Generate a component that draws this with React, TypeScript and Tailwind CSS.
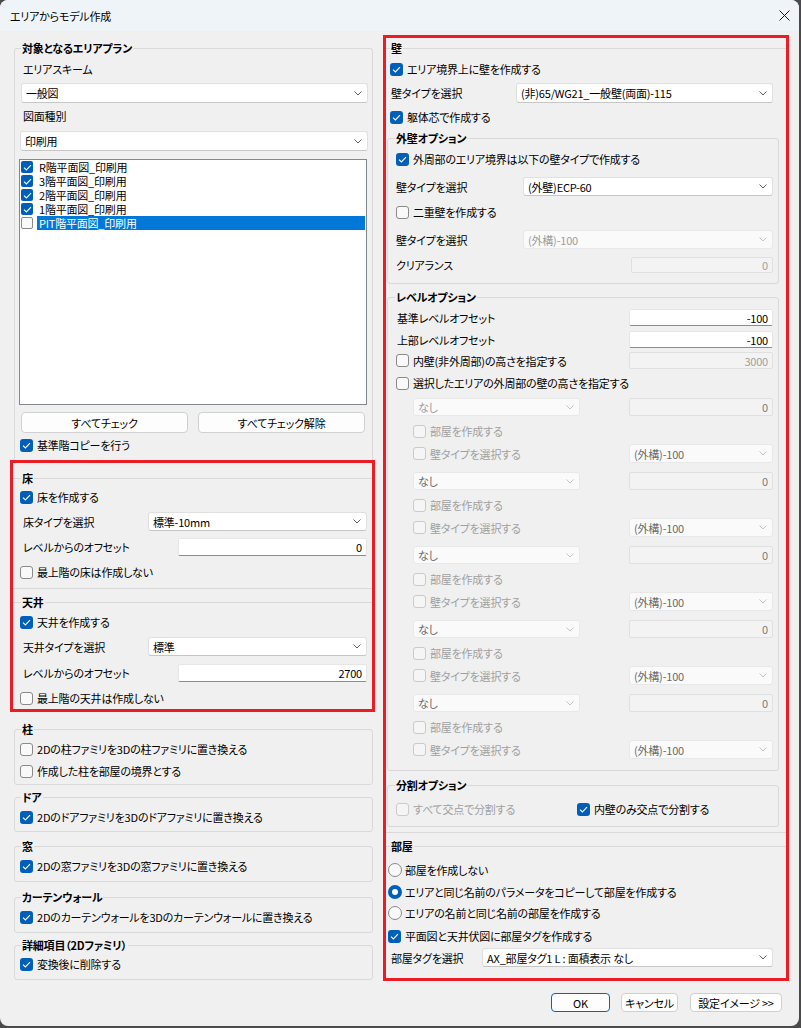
import React from "react";

type CBProps = { label: string; checked?: boolean; disabled?: boolean; className?: string };

function Tick() {
  return (
    <svg width="9" height="7" viewBox="0 0 9 7" fill="none">
      <path d="M1 3.6L3.4 5.9L8 1.2" stroke="#fff" strokeWidth="1.1" />
    </svg>
  );
}

function CheckBox({ label, checked, disabled, className = "" }: CBProps) {
  const box = checked
    ? "bg-[#005fb8]"
    : disabled
      ? "border border-[#cacaca] bg-[#f5f5f5]"
      : "border border-[#8a8a8a] bg-[#f9f9f9]";
  return (
    <div className={`flex h-[14px] items-center gap-[4px] ${className}`}>
      <span className={`flex h-[13px] w-[13px] shrink-0 items-center justify-center rounded-[3px] ${box}`}>
        {checked && <Tick />}
      </span>
      <span className={`whitespace-nowrap ${disabled ? "text-[#a0a0a0]" : ""}`}>{label}</span>
    </div>
  );
}

function Radio({ label, checked, className = "" }: CBProps) {
  return (
    <div className={`flex h-[14px] items-center gap-[3px] ${className}`}>
      {checked ? (
        <span className="flex h-[14px] w-[14px] shrink-0 items-center justify-center rounded-full bg-[#005fb8]">
          <span className="h-[6px] w-[6px] rounded-full bg-white" />
        </span>
      ) : (
        <span className="h-[14px] w-[14px] shrink-0 rounded-full border border-[#8a8a8a] bg-[#f9f9f9]" />
      )}
      <span className="whitespace-nowrap">{label}</span>
    </div>
  );
}

function Chevron({ disabled }: { disabled?: boolean }) {
  return (
    <svg width="8" height="5" viewBox="0 0 8 5" fill="none">
      <path d="M0.5 0.5L4 4L7.5 0.5" stroke={disabled ? "#c4c4c4" : "#606060"} />
    </svg>
  );
}

function Select({ value, disabled, tone = "", className = "" }: { value: string; disabled?: boolean; tone?: string; className?: string }) {
  return (
    <div
      className={`flex h-full items-center justify-between rounded-[3px] border pl-[4px] pr-[5px] ${
        disabled ? "border-[#e8e8e8] bg-[#fafafa] text-[#9d9d9d]" : "border-[#e0e0e0] border-b-[#c6c6c6] bg-white"
      } ${className}`}
    >
      <span className={`whitespace-nowrap ${tone}`}>{value}</span>
      <Chevron disabled={disabled} />
    </div>
  );
}

function Field({ value, disabled, tone = "", className = "" }: { value: string; disabled?: boolean; tone?: string; className?: string }) {
  return (
    <div
      className={`flex h-full items-center justify-end rounded-[2px] border pr-[4px] ${
        disabled ? "border-[#e0e0e0] bg-[#f3f3f3] text-[#a0a0a0]" : "border-[#e6e6e6] border-b-[#8c8c8c] bg-white"
      } ${className}`}
    >
      <span className={tone}>{value}</span>
    </div>
  );
}

function Group({
  title,
  legendClass = "",
  className = "",
  children,
}: {
  title: string;
  legendClass?: string;
  className?: string;
  children: React.ReactNode;
}) {
  return (
    <fieldset className={`min-w-0 rounded-[3px] border border-[#d9d9d9] ${className}`}>
      <legend className={`px-[1px] font-bold leading-[14px] ${legendClass}`}>{title}</legend>
      {children}
    </fieldset>
  );
}

const plans = [
  { name: "R階平面図_印刷用", checked: true },
  { name: "3階平面図_印刷用", checked: true },
  { name: "2階平面図_印刷用", checked: true },
  { name: "1階平面図_印刷用", checked: true },
  { name: "PIT階平面図_印刷用", checked: false, selected: true },
];

function LevelBlock({ first }: { first: boolean }) {
  return (
    <div className={`${first ? "mt-[8px]" : "mt-[9px]"} pl-[17px]`}>
      <div className="flex h-[18px] items-center">
        <Select value="なし" disabled tone={first ? "" : "text-[#6a6a6a]"} className="w-[167px]" />
        <Field value="0" disabled tone="text-[#7a7a7a]" className="ml-auto w-[144px]" />
      </div>
      <CheckBox label="部屋を作成する" disabled className="mt-[8px]" />
      <div className="mt-[6px] flex h-[19px] items-center">
        <CheckBox label="壁タイプを選択する" disabled />
        <Select value="(外構)-100" disabled tone="text-[#6a6a6a]" className="ml-auto w-[144px]" />
      </div>
    </div>
  );
}

export default function App() {
  return (
    <div className="h-[1028px] w-[801px] bg-[#4a4a4a] font-['Noto_Sans_CJK_JP','Noto_Sans',sans-serif] text-[11px] leading-[14px] tracking-[-0.2px] text-black [font-feature-settings:'palt']">
      <div className="flex h-[1026px] w-[799px] flex-col overflow-hidden rounded-[8px] bg-[#f0f0f0]">
        {/* Title bar */}
        <div className="flex h-[31px] shrink-0 items-center justify-between bg-[#eff4f9] pl-[10px] pr-[9px]">
          <span>エリアからモデル作成</span>
          <svg width="11" height="11" viewBox="0 0 11 11" fill="none">
            <path d="M0.5 0.5L10.5 10.5M10.5 0.5L0.5 10.5" stroke="#1a1a1a" strokeWidth="1" />
          </svg>
        </div>

        <div className="flex items-start gap-[8px] px-[10px] pt-[4px]">
          {/* Left column */}
          <div className="w-[365px] shrink-0 pt-[6px]">
            <Group title="対象となるエリアプラン" legendClass="ml-[6px]" className="ml-[4px] mr-[2px] rounded-b-none border-b-0">
              <div className="pb-[8px] pl-[6px] pr-[4px]">
                <div className="mt-[7px] pl-[2px]">エリアスキーム</div>
                <div className="mt-[7px] h-[20px]">
                  <Select value="一般図" />
                </div>
                <div className="mt-[6px] pl-[2px]">図面種別</div>
                <div className="mt-[8px] h-[20px]">
                  <Select value="印刷用" className="-ml-[1px]" />
                </div>
                <div className="-ml-[2px] mr-[1px] mt-[8px] h-[246px] border border-[#828790] bg-white">
                  {plans.map((p) => (
                    <div key={p.name} className="flex h-[14px] items-center">
                      <span
                        className={`ml-[1px] flex h-[12px] w-[12px] shrink-0 items-center justify-center rounded-[2px] ${
                          p.checked ? "bg-[#005fb8]" : "border border-[#8a8a8a] bg-[#f9f9f9]"
                        }`}
                      >
                        {p.checked && <Tick />}
                      </span>
                      <span
                        className={`ml-[4px] mr-[1px] flex h-[14px] flex-1 items-center px-[2px] ${
                          p.selected ? "bg-[#0078d7] text-white" : ""
                        }`}
                      >
                        {p.name}
                      </span>
                    </div>
                  ))}
                </div>
                <div className="mt-[7px] flex gap-[10px]">
                  <button className="h-[21px] w-[167px] rounded-[4px] border border-[#d0d0d0] bg-[#fdfdfd]">すべてチェック</button>
                  <button className="h-[21px] w-[167px] rounded-[4px] border border-[#d0d0d0] bg-[#fdfdfd]">すべてチェック解除</button>
                </div>
                <CheckBox label="基準階コピーを行う" checked className="-ml-[1px] mt-[5px]" />
              </div>
            </Group>

            {/* Floor / ceiling */}
            <div className="border-[3px] border-[#ec1c24]">
              <Group title="床" legendClass="ml-[8px]" className="mt-[8px] rounded-none border-x-0">
                <div className="pb-[9px] pl-[7px] pr-[5px]">
                  <CheckBox label="床を作成する" checked className="mt-[5px]" />
                  <div className="mt-[8px] flex h-[19px] items-center">
                    <span className="ml-[3px]">床タイプを選択</span>
                    <Select value="標準-10mm" className="ml-auto w-[219px]" />
                  </div>
                  <div className="mt-[7px] flex h-[18px] items-center">
                    <span className="ml-[3px]">レベルからのオフセット</span>
                    <Field value="0" className="ml-auto w-[189px]" />
                  </div>
                  <CheckBox label="最上階の床は作成しない" className="mt-[9px]" />
                </div>
              </Group>
              <Group title="天井" legendClass="ml-[8px]" className="mt-[6px] rounded-none border-x-0 border-b-0">
                <div className="pb-[4px] pl-[7px] pr-[5px]">
                  <CheckBox label="天井を作成する" checked className="mt-[6px]" />
                  <div className="mt-[8px] flex h-[19px] items-center">
                    <span className="ml-[3px]">天井タイプを選択</span>
                    <Select value="標準" className="ml-auto w-[219px]" />
                  </div>
                  <div className="mt-[8px] flex h-[18px] items-center">
                    <span className="ml-[3px]">レベルからのオフセット</span>
                    <Field value="2700" className="ml-auto w-[189px]" />
                  </div>
                  <CheckBox label="最上階の天井は作成しない" className="mt-[9px]" />
                </div>
              </Group>
            </div>

            <Group title="柱" legendClass="ml-[6px]" className="ml-[4px] mr-[2px] mt-[10px]">
              <div className="pb-[6px] pl-[5px]">
                <CheckBox label="2Dの柱ファミリを3Dの柱ファミリに置き換える" className="mt-[6px]" />
                <CheckBox label="作成した柱を部屋の境界とする" className="mt-[8px]" />
              </div>
            </Group>
            <Group title="ドア" legendClass="ml-[6px]" className="ml-[4px] mr-[2px] mt-[5px]">
              <div className="pb-[7px] pl-[5px]">
                <CheckBox label="2Dのドアファミリを3Dのドアファミリに置き換える" checked className="mt-[6px]" />
              </div>
            </Group>
            <Group title="窓" legendClass="ml-[6px]" className="ml-[4px] mr-[2px] mt-[7px]">
              <div className="pb-[8px] pl-[5px]">
                <CheckBox label="2Dの窓ファミリを3Dの窓ファミリに置き換える" checked className="mt-[6px]" />
              </div>
            </Group>
            <Group title="カーテンウォール" legendClass="ml-[6px]" className="ml-[4px] mr-[2px] mt-[8px]">
              <div className="pb-[8px] pl-[5px]">
                <CheckBox label="2Dのカーテンウォールを3Dのカーテンウォールに置き換える" checked className="mt-[6px]" />
              </div>
            </Group>
            <Group title="詳細項目（2Dファミリ）" legendClass="ml-[6px]" className="ml-[4px] mr-[2px] mt-[5px]">
              <div className="pb-[8px] pl-[5px]">
                <CheckBox label="変換後に削除する" checked className="mt-[5px]" />
              </div>
            </Group>
          </div>

          {/* Right column */}
          <div className="w-[406px] shrink-0 border-[3px] border-[#ec1c24]">
            <Group title="壁" legendClass="ml-[4px]" className="mt-[3px] rounded-none border-x-0">
              <div className="pl-[4px] pr-[13px]">
                <CheckBox label="エリア境界上に壁を作成する" checked className="mt-[7px]" />
                <div className="mt-[7px] flex h-[20px] items-center">
                  <span className="ml-[1px]">壁タイプを選択</span>
                  <Select value="(非)65/WG21_一般壁(両面)-115" className="ml-auto w-[257px]" />
                </div>
                <CheckBox label="躯体芯で作成する" checked className="mt-[7px]" />
              </div>

              <Group title="外壁オプション" legendClass="ml-[7px]" className="ml-[1px] mr-[7px] mt-[7px]">
                <div className="pb-[10px] pl-[8px] pr-[5px]">
                  <CheckBox label="外周部のエリア境界は以下の壁タイプで作成する" checked className="mt-[7px]" />
                  <div className="mt-[11px] flex h-[19px] items-center">
                    <span>壁タイプを選択</span>
                    <Select value="(外壁)ECP-60" className="ml-auto w-[250px]" />
                  </div>
                  <CheckBox label="二重壁を作成する" className="mt-[9px]" />
                  <div className="mt-[11px] flex h-[19px] items-center">
                    <span>壁タイプを選択</span>
                    <Select value="(外構)-100" disabled className="ml-auto w-[250px]" />
                  </div>
                  <div className="mt-[8px] flex h-[16px] items-center">
                    <span>クリアランス</span>
                    <Field value="0" disabled className="ml-auto w-[142px]" />
                  </div>
                </div>
              </Group>

              <Group title="レベルオプション" legendClass="ml-[7px]" className="ml-[1px] mr-[7px] mt-[6px]">
                <div className="pb-[11px] pl-[8px] pr-[5px]">
                  <div className="mt-[5px] flex h-[17px] items-center">
                    <span className="ml-[1px]">基準レベルオフセット</span>
                    <Field value="-100" className="ml-auto w-[144px]" />
                  </div>
                  <div className="mt-[5px] flex h-[17px] items-center">
                    <span className="ml-[1px]">上部レベルオフセット</span>
                    <Field value="-100" className="ml-auto w-[144px]" />
                  </div>
                  <div className="mt-[4px] flex h-[17px] items-center">
                    <CheckBox label="内壁(非外周部)の高さを指定する" />
                    <Field value="3000" disabled className="ml-auto w-[144px]" />
                  </div>
                  <CheckBox label="選択したエリアの外周部の壁の高さを指定する" className="mt-[7px]" />
                  {[0, 1, 2, 3, 4].map((i) => (
                    <LevelBlock key={i} first={i === 0} />
                  ))}
                </div>
              </Group>

              <Group title="分割オプション" legendClass="ml-[7px]" className="ml-[1px] mr-[7px] mt-[7px]">
                <div className="flex pb-[10px] pl-[8px] pt-[10px]">
                  <CheckBox label="すべて交点で分割する" disabled className="w-[181px]" />
                  <CheckBox label="内壁のみ交点で分割する" checked />
                </div>
              </Group>
              <div className="h-[5px]" />
            </Group>

            <Group title="部屋" legendClass="ml-[4px]" className="mt-[6px] rounded-none border-x-0 border-b-0">
              <div className="pb-[11px] pl-[2px] pr-[13px]">
                <Radio label="部屋を作成しない" className="mt-[10px]" />
                <Radio label="エリアと同じ名前のパラメータをコピーして部屋を作成する" checked className="mt-[8px]" />
                <Radio label="エリアの名前と同じ名前の部屋を作成する" className="mt-[7px]" />
                <CheckBox label="平面図と天井伏図に部屋タグを作成する" checked className="mt-[9px]" />
                <div className="mt-[5px] flex h-[19px] items-center">
                  <span className="ml-[3px]">部屋タグを選択</span>
                  <Select value="AX_部屋タグ1 L : 面積表示 なし" className="ml-auto w-[291px]" />
                </div>
              </div>
            </Group>
          </div>
        </div>

        {/* Buttons */}
        <div className="mt-[12px] flex justify-end gap-[11px] pr-[17px]">
          <button className="h-[19px] w-[59px] rounded-[4px] border border-[#0067c0] bg-[#fdfdfd]">OK</button>
          <button className="h-[19px] w-[57px] rounded-[4px] border border-[#d0d0d0] bg-[#fdfdfd]">キャンセル</button>
          <button className="ml-[1px] h-[19px] w-[92px] rounded-[4px] border border-[#d0d0d0] bg-[#fdfdfd]">設定イメージ &gt;&gt;</button>
        </div>
      </div>
    </div>
  );
}
